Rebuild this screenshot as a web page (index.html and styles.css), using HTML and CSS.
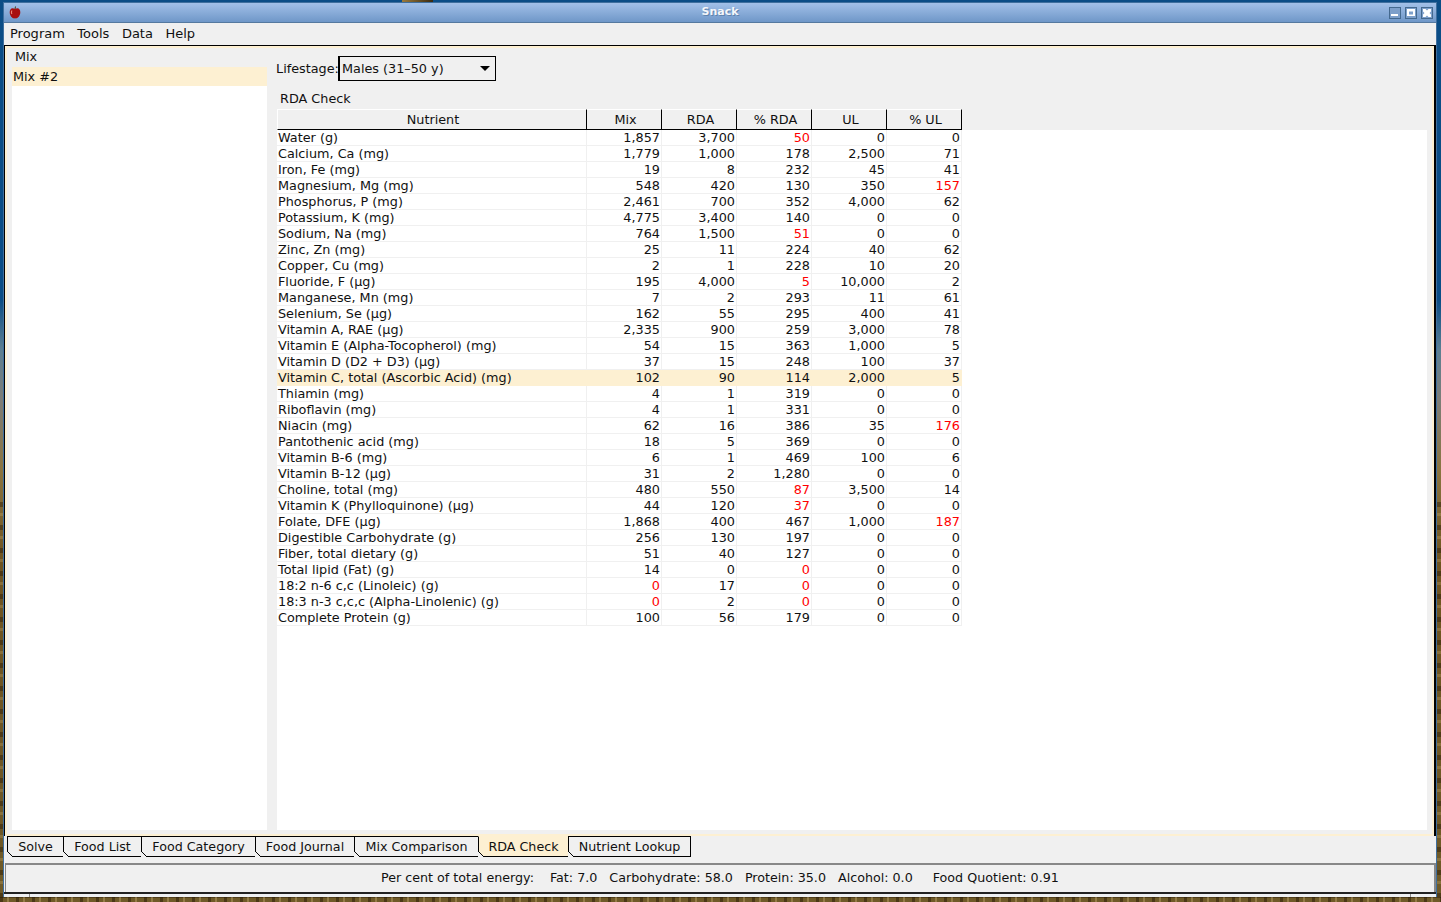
FILE: index.html
```html
<!DOCTYPE html>
<html lang="en">
<head>
    <meta charset="UTF-8">
    <title>Snack</title>
    <link rel="stylesheet" href="styles.css">
</head>
<body>
<div class="window">
    <div class="titlebar">
        <svg class="app-icon" width="12" height="13" viewBox="0 0 12 13"><path d="M6 3C3 1 .5 3 .7 6.500.9 10 3.500 13 6 12.300 8.500 13 11.100 10 11.300 6.500 11.500 3 9 1 6 3Z" fill="#a80f0f"/><path d="M3 4.500C2.200 5.500 2.200 7 2.800 8" stroke="#f08a7a" stroke-width="1.200" fill="none"/><path d="M6 3 6.500.5" stroke="#4a3a10" fill="none"/></svg>
        <span class="title">Snack</span>
        <div class="winbuttons">
            <span class="winbtn"><svg width="10" height="10" viewBox="0 0 10 10"><rect x="1" y="6" width="7" height="2" fill="#fff"/></svg></span>
            <span class="winbtn"><svg width="10" height="10" viewBox="0 0 10 10"><path d="M1 1h8v7H1Z M3 3.500v3h4v-3Z" fill="#fff" fill-rule="evenodd"/></svg></span>
            <span class="winbtn"><svg width="10" height="10" viewBox="0 0 10 10"><path d="M1 1h2.500L5 2.500 6.500 1H9v2.500L7.500 5 9 6.500V9H6.500L5 7.500 3.500 9H1V6.500L2.500 5 1 3.500Z" fill="#fff"/></svg></span>
        </div>
    </div>

    <div class="menubar">
        <span>Program</span>
        <span>Tools</span>
        <span>Data</span>
        <span>Help</span>
    </div>

    <div class="panel">
        <div class="sidebar">
            <div class="sidebar-head">Mix</div>
            <div class="mixlist">
                <div class="mix-selected">Mix #2</div>
            </div>
        </div>
        <div class="main">
            <div class="lifestage">
                <label>Lifestage:</label>
                <div class="combo">
                    <span>Males (31–50 y)</span>
                    <span class="arrow"></span>
                </div>
            </div>
            <div class="section-label">RDA Check</div>
            <div class="tablebox">
                <table class="rda">
                    <thead>
                        <tr><th>Nutrient</th><th>Mix</th><th>RDA</th><th>% RDA</th><th>UL</th><th>% UL</th></tr>
                    </thead>
                    <tbody>
                        <tr><td>Water (g)</td><td>1,857</td><td>3,700</td><td class="low">50</td><td>0</td><td>0</td></tr>
                        <tr><td>Calcium, Ca (mg)</td><td>1,779</td><td>1,000</td><td>178</td><td>2,500</td><td>71</td></tr>
                        <tr><td>Iron, Fe (mg)</td><td>19</td><td>8</td><td>232</td><td>45</td><td>41</td></tr>
                        <tr><td>Magnesium, Mg (mg)</td><td>548</td><td>420</td><td>130</td><td>350</td><td class="low">157</td></tr>
                        <tr><td>Phosphorus, P (mg)</td><td>2,461</td><td>700</td><td>352</td><td>4,000</td><td>62</td></tr>
                        <tr><td>Potassium, K (mg)</td><td>4,775</td><td>3,400</td><td>140</td><td>0</td><td>0</td></tr>
                        <tr><td>Sodium, Na (mg)</td><td>764</td><td>1,500</td><td class="low">51</td><td>0</td><td>0</td></tr>
                        <tr><td>Zinc, Zn (mg)</td><td>25</td><td>11</td><td>224</td><td>40</td><td>62</td></tr>
                        <tr><td>Copper, Cu (mg)</td><td>2</td><td>1</td><td>228</td><td>10</td><td>20</td></tr>
                        <tr><td>Fluoride, F (µg)</td><td>195</td><td>4,000</td><td class="low">5</td><td>10,000</td><td>2</td></tr>
                        <tr><td>Manganese, Mn (mg)</td><td>7</td><td>2</td><td>293</td><td>11</td><td>61</td></tr>
                        <tr><td>Selenium, Se (µg)</td><td>162</td><td>55</td><td>295</td><td>400</td><td>41</td></tr>
                        <tr><td>Vitamin A, RAE (µg)</td><td>2,335</td><td>900</td><td>259</td><td>3,000</td><td>78</td></tr>
                        <tr><td>Vitamin E (Alpha-Tocopherol) (mg)</td><td>54</td><td>15</td><td>363</td><td>1,000</td><td>5</td></tr>
                        <tr><td>Vitamin D (D2 + D3) (µg)</td><td>37</td><td>15</td><td>248</td><td>100</td><td>37</td></tr>
                        <tr class="selected"><td>Vitamin C, total (Ascorbic Acid) (mg)</td><td>102</td><td>90</td><td>114</td><td>2,000</td><td>5</td></tr>
                        <tr><td>Thiamin (mg)</td><td>4</td><td>1</td><td>319</td><td>0</td><td>0</td></tr>
                        <tr><td>Riboflavin (mg)</td><td>4</td><td>1</td><td>331</td><td>0</td><td>0</td></tr>
                        <tr><td>Niacin (mg)</td><td>62</td><td>16</td><td>386</td><td>35</td><td class="low">176</td></tr>
                        <tr><td>Pantothenic acid (mg)</td><td>18</td><td>5</td><td>369</td><td>0</td><td>0</td></tr>
                        <tr><td>Vitamin B-6 (mg)</td><td>6</td><td>1</td><td>469</td><td>100</td><td>6</td></tr>
                        <tr><td>Vitamin B-12 (µg)</td><td>31</td><td>2</td><td>1,280</td><td>0</td><td>0</td></tr>
                        <tr><td>Choline, total (mg)</td><td>480</td><td>550</td><td class="low">87</td><td>3,500</td><td>14</td></tr>
                        <tr><td>Vitamin K (Phylloquinone) (µg)</td><td>44</td><td>120</td><td class="low">37</td><td>0</td><td>0</td></tr>
                        <tr><td>Folate, DFE (µg)</td><td>1,868</td><td>400</td><td>467</td><td>1,000</td><td class="low">187</td></tr>
                        <tr><td>Digestible Carbohydrate (g)</td><td>256</td><td>130</td><td>197</td><td>0</td><td>0</td></tr>
                        <tr><td>Fiber, total dietary (g)</td><td>51</td><td>40</td><td>127</td><td>0</td><td>0</td></tr>
                        <tr><td>Total lipid (Fat) (g)</td><td>14</td><td>0</td><td class="low">0</td><td>0</td><td>0</td></tr>
                        <tr><td>18:2 n-6 c,c (Linoleic) (g)</td><td class="low">0</td><td>17</td><td class="low">0</td><td>0</td><td>0</td></tr>
                        <tr><td>18:3 n-3 c,c,c (Alpha-Linolenic) (g)</td><td class="low">0</td><td>2</td><td class="low">0</td><td>0</td><td>0</td></tr>
                        <tr><td>Complete Protein (g)</td><td>100</td><td>56</td><td>179</td><td>0</td><td>0</td></tr>
                    </tbody>
                </table>
            </div>
        </div>
    </div>

    <div class="tabs">
        <span class="tab tab-solve">Solve</span>
        <span class="tab tab-list">Food List</span>
        <span class="tab tab-category">Food Category</span>
        <span class="tab tab-journal">Food Journal</span>
        <span class="tab tab-comparison">Mix Comparison</span>
        <span class="tab tab-rda active">RDA Check</span>
        <span class="tab tab-lookup">Nutrient Lookup</span>
    </div>

    <div class="statusbar">
        <span class="energy">Per cent of total energy:</span>
        <span>Fat: 7.0</span>
        <span>Carbohydrate: 58.0</span>
        <span>Protein: 35.0</span>
        <span>Alcohol: 0.0</span>
        <span class="quotient">Food Quotient: 0.91</span>
    </div>

    <div class="grip">
        <span class="grip-left"></span>
        <span class="grip-mid"></span>
        <span class="grip-right"></span>
    </div>
</div>
</body>
</html>
```

FILE: styles.css
```css
html, body {
    margin: 0;
    height: 100%;
}

body {
    height: 902px;
    overflow: hidden;
    font-family: "DejaVu Sans", sans-serif;
    font-size: 12.8px;
    color: #111;
    background-color: #5a4418;
    background-image:
        repeating-linear-gradient(90deg, rgba(30, 15, 0, .45) 0 3px, transparent 3px 7px, rgba(255, 225, 160, .25) 7px 9px, transparent 9px 16px),
        repeating-linear-gradient(180deg, rgba(30, 15, 0, .4) 0 5px, transparent 5px 11px, rgba(255, 225, 160, .18) 11px 14px, transparent 14px 23px),
        linear-gradient(90deg, transparent 402px, #9a7a3c 402px, #3a2a10 433px, transparent 433px),
        linear-gradient(180deg, #0b4d86 0, #0b4d86 300px, #5d7f92 350px, #7d7d78 400px, #8a7440 470px, #6f5420 560px, #6f5a28 902px);
    background-size: 100% 5px, 100% 400px, 100% 2px, 100% 100%;
    background-position: 0 100%, 0 100%, 0 0, 0 0;
    background-repeat: no-repeat;
}

.window {
    box-sizing: border-box;
    width: 1434px;
    height: 895px;
    margin: 2px 0 0 3px;
    display: flex;
    flex-direction: column;
    background-color: #f0f0f0;
    border: 1px solid #3f6f9e;
    border-bottom: 0;
}

/* title bar */
.titlebar {
    height: 19px;
    flex: none;
    display: flex;
    align-items: center;
    position: relative;
    padding-left: 5px;
    background: linear-gradient(180deg, #a2c0e8, #6f97c8);
    border-bottom: 1px solid #55799f;
}

.app-icon {
    flex: none;
}

.title {
    position: absolute;
    left: 0;
    right: 0;
    top: 2px;
    text-align: center;
    font-size: 11px;
    font-weight: bold;
    color: #f4f6fa;
    text-shadow: 1px 1px 0 #5f83ad;
}

.winbuttons {
    margin-left: auto;
    margin-right: 3px;
    display: flex;
    gap: 4px;
}

.winbtn {
    box-sizing: border-box;
    width: 12px;
    height: 12px;
    display: block;
    border: 1px solid #44698f;
    background-color: #7d9fca;
    line-height: 0;
}

/* menu */
.menubar {
    box-sizing: border-box;
    height: 22px;
    flex: none;
    display: flex;
    align-items: center;
    gap: 12.500px;
    padding: 0 0 2px 6px;
    font-size: 13px;
    background-color: #f0f0f0;
}

/* main panel */
.panel {
    flex: 1;
    min-height: 0;
    display: flex;
    background-color: #f0f0f0;
    border-top: 1px solid #000;
    border-left: 1px solid #000;
    border-right: 2px solid #000;
    box-shadow: inset 2px 2px 0 #fdf0d2, inset -2px -2px 0 #fdf0d2;
    padding: 2px 7px 6px 7px;
}

.sidebar {
    width: 255px;
    flex: none;
    display: flex;
    flex-direction: column;
    margin-right: 10px;
}

.sidebar-head {
    height: 19px;
    line-height: 17px;
    padding-left: 3px;
}

.mixlist {
    flex: 1;
    background-color: #fff;
}

.mix-selected {
    height: 19px;
    line-height: 19px;
    padding-left: 1px;
    background-color: #fdf0d2;
}

.main {
    flex: 1;
    min-width: 0;
    display: flex;
    flex-direction: column;
}

.lifestage {
    height: 25px;
    margin: 8px 0 0 -1px;
    display: flex;
    align-items: center;
    flex: none;
}

.lifestage label {
    width: 62px;
}

.combo {
    box-sizing: border-box;
    width: 158px;
    height: 25px;
    padding: 0 5px 0 2px;
    display: flex;
    align-items: center;
    justify-content: space-between;
    border: 1px solid #000;
    border-left-width: 2px;
}

.arrow {
    width: 0;
    height: 0;
    border-left: 5px solid transparent;
    border-right: 5px solid transparent;
    border-top: 5px solid #000;
}

.section-label {
    height: 28px;
    line-height: 36px;
    padding-left: 3px;
    flex: none;
}

.tablebox {
    flex: 1;
    background: linear-gradient(#f0f0f0 21px, #fff 21px);
}

/* nutrient table */
.rda {
    border-collapse: separate;
    border-spacing: 0;
    table-layout: fixed;
    width: 685px;
}

.rda th {
    box-sizing: border-box;
    width: 75px;
    height: 21px;
    padding: 0 0 0 3px;
    font-weight: normal;
    background-color: #f0f0f0;
    border-top: 1px solid #fff;
    border-right: 1px solid #000;
    border-bottom: 1px solid #000;
}

.rda th:first-child {
    width: 310px;
    padding-left: 2px;
    border-left: 1px solid #fff;
}

.rda td {
    box-sizing: border-box;
    height: 16px;
    padding: 0 1px 0 0;
    line-height: 15px;
    text-align: right;
    background-color: #fff;
    border-right: 1px solid #f0f0f0;
    border-bottom: 1px solid #f0f0f0;
    white-space: nowrap;
}

.rda td:first-child {
    padding: 0 0 0 1px;
    text-align: left;
}

.rda .low {
    color: #f00;
}

.rda .selected td {
    background-color: #fdf0d2;
    border-color: #fdf0d2;
}

/* tabs */
.tabs {
    height: 21px;
    flex: none;
    display: flex;
    padding-left: 4px;
    font-size: 12.7px;
}

.tab {
    box-sizing: border-box;
    height: 21px;
    line-height: 19px;
    margin-left: -1px;
    text-align: center;
    position: relative;
    border: 1px solid #000;
}

.tab::before {
    content: "";
    position: absolute;
    left: -1px;
    bottom: -1px;
    width: 6px;
    height: 6px;
    background: linear-gradient(45deg, #f0f0f0 44%, #000 44%, #000 58%, transparent 58%);
}

.tab-solve { width: 57px; }
.tab-list { width: 79px; }
.tab-category { width: 115px; }
.tab-journal { width: 100px; }
.tab-comparison { width: 125px; }
.tab-rda { width: 91px; }
.tab-lookup { width: 123px; }

.tab.active {
    background-color: #fdf0d2;
    border-top-color: #fdf0d2;
}

/* status */
.statusbar {
    box-sizing: border-box;
    height: 29px;
    flex: none;
    margin: 6px 0 0 1px;
    padding: 0 0 3px 375px;
    display: flex;
    align-items: center;
    gap: 12px;
    font-size: 12.7px;
    border-top: 2px solid #888;
    border-left: 1px solid #888;
    border-right: 2px solid #888;
}

.energy {
    margin-right: 4px;
}

.quotient {
    margin-left: 8px;
}

.grip {
    height: 3px;
    flex: none;
    display: flex;
    background-color: #eef0f2;
    border-top: 2px solid #222;
}

.grip-left {
    width: 25px;
    border-right: 1px solid #8a8a8a;
}

.grip-mid {
    flex: 1;
}

.grip-right {
    width: 25px;
    border-left: 1px solid #8a8a8a;
}
```
